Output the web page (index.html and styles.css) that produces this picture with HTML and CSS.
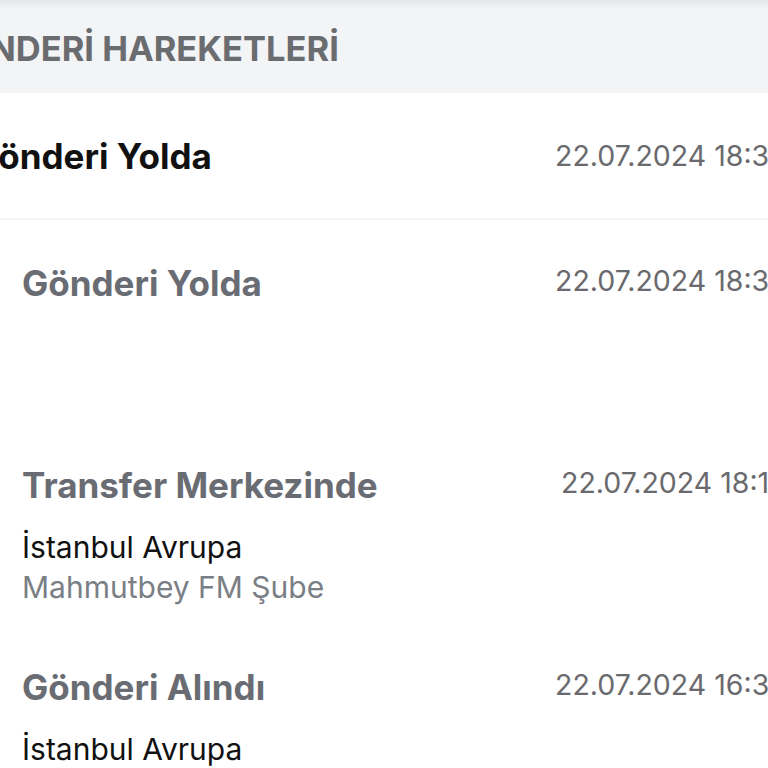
FILE: index.html
```
<!DOCTYPE html>
<html>
<head>
    <title>Gönderi Hareketleri</title>

    <link rel="stylesheet" href="styles.css">

</head>
<body>

<div class="panel">
    <div class="panel-head">
        <h2>GÖNDERİ HAREKETLERİ</h2>
    </div>

    <div class="current">
        <span class="current-title">Gönderi Yolda</span>
        <span class="date">22.07.2024 18:35</span>
    </div>

    <ul class="moves">
        <li class="move">
            <div class="move-info">
                <p class="move-title">Gönderi Yolda</p>
            </div>
            <span class="date">22.07.2024 18:35</span>
        </li>
        <li class="move">
            <div class="move-info">
                <p class="move-title">Transfer Merkezinde</p>
                <p class="city">İstanbul Avrupa</p>
                <p class="branch">Mahmutbey FM Şube</p>
            </div>
            <span class="date shifted">22.07.2024 18:12</span>
        </li>
        <li class="move">
            <div class="move-info">
                <p class="move-title">Gönderi Alındı</p>
                <p class="city">İstanbul Avrupa</p>
                <p class="branch">Mahmutbey FM Şube</p>
            </div>
            <span class="date">22.07.2024 16:31</span>
        </li>
    </ul>
</div>

</body>
</html>
```

FILE: styles.css
```
body {
    font-family: Inter, "Noto Sans", Arial, sans-serif;
    margin: 0;
    padding: 0;
    background-color: #fff;
    overflow: hidden;
}

.panel {
    width: 900px;
}

/* grey title strip, slight shade at the top */
.panel-head {
    background: linear-gradient(#e4e5e7, #f3f4f6 9px);
    height: 90px;
    padding-top: 3px;
    display: flex;
    align-items: center;
}

.panel-head h2 {
    margin: 0 0 0 -63px;
    font-size: 34.5px;
    font-weight: 700;
    color: #6b6c70;
}

.current {
    display: grid;
    grid-template-columns: 583px 1fr;
    align-items: center;
    height: 125px;
    border-bottom: 2px solid #f5f5f6;
    margin-left: -28px;
}

.current-title {
    font-size: 35px;
    font-weight: 700;
    color: #111;
}

.date {
    font-size: 28.5px;
    color: #6a6a6e;
    white-space: nowrap;
}

.moves {
    list-style: none;
    margin: 0;
    padding: 0;
}

.move {
    display: grid;
    grid-template-columns: 533px 1fr;
    align-items: start;
    padding: 42px 0 0 22px;
    height: 160px;
}

.move .date {
    margin-top: 1px;
}

.move .shifted {
    margin-left: 6px;
}

.move-title {
    margin: 0;
    font-size: 35px;
    font-weight: 700;
    color: #696c73;
}

.city {
    margin: 21px 0 0;
    font-size: 30px;
    line-height: 40px;
    color: #111;
}

.branch {
    margin: 0;
    font-size: 30px;
    line-height: 40px;
    color: #7a7e85;
}
```
